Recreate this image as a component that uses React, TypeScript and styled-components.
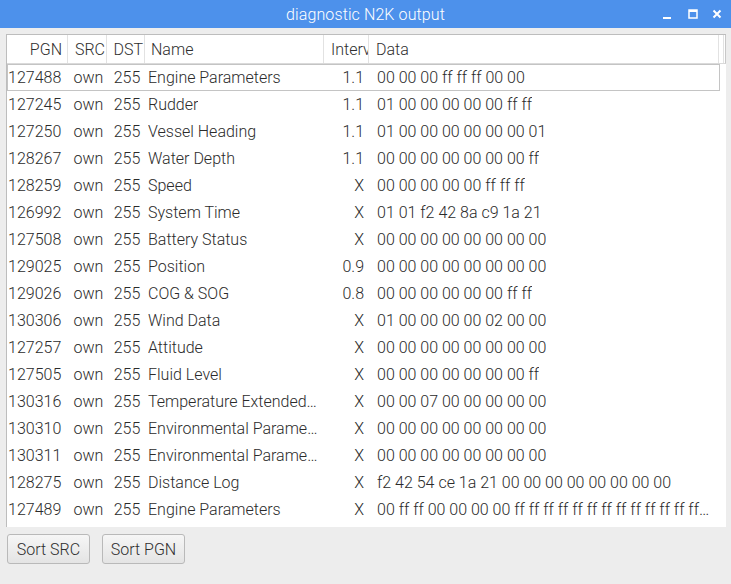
import React from 'react';
import styled, { createGlobalStyle } from 'styled-components';

const GlobalStyle = createGlobalStyle`
  html, body {
    margin: 0;
    padding: 0;
    background: #ededed;
  }
  body {
    font-family: Roboto, "Liberation Sans", sans-serif;
    color: #333333;
  }
`;

type Msg = {
  pgn: string;
  name: string;
  interval: string;
  data: string;
};

const messages: Msg[] = [
  { pgn: '127488', name: 'Engine Parameters', interval: '1.1', data: '00 00 00 ff ff ff 00 00' },
  { pgn: '127245', name: 'Rudder', interval: '1.1', data: '01 00 00 00 00 00 ff ff' },
  { pgn: '127250', name: 'Vessel Heading', interval: '1.1', data: '01 00 00 00 00 00 00 01' },
  { pgn: '128267', name: 'Water Depth', interval: '1.1', data: '00 00 00 00 00 00 00 ff' },
  { pgn: '128259', name: 'Speed', interval: 'X', data: '00 00 00 00 00 ff ff ff' },
  { pgn: '126992', name: 'System Time', interval: 'X', data: '01 01 f2 42 8a c9 1a 21' },
  { pgn: '127508', name: 'Battery Status', interval: 'X', data: '00 00 00 00 00 00 00 00' },
  { pgn: '129025', name: 'Position', interval: '0.9', data: '00 00 00 00 00 00 00 00' },
  { pgn: '129026', name: 'COG & SOG', interval: '0.8', data: '00 00 00 00 00 00 ff ff' },
  { pgn: '130306', name: 'Wind Data', interval: 'X', data: '01 00 00 00 00 02 00 00' },
  { pgn: '127257', name: 'Attitude', interval: 'X', data: '00 00 00 00 00 00 00 00' },
  { pgn: '127505', name: 'Fluid Level', interval: 'X', data: '00 00 00 00 00 00 00 ff' },
  { pgn: '130316', name: 'Temperature Extended Range', interval: 'X', data: '00 00 07 00 00 00 00 00' },
  { pgn: '130310', name: 'Environmental Parameters', interval: 'X', data: '00 00 00 00 00 00 00 00' },
  { pgn: '130311', name: 'Environmental Parameters', interval: 'X', data: '00 00 00 00 00 00 00 00' },
  { pgn: '128275', name: 'Distance Log', interval: 'X', data: 'f2 42 54 ce 1a 21 00 00 00 00 00 00 00 00' },
  {
    pgn: '127489',
    name: 'Engine Parameters',
    interval: 'X',
    data: '00 ff ff 00 00 00 00 ff ff ff ff ff ff ff ff ff ff ff ff ff ff ff ff ff ff',
  },
];

const COLS = '61px 39px 38px 179px 45px 350px';

const Window = styled.div`
  width: 731px;
  height: 584px;
  display: flex;
  flex-direction: column;
  background: #ededed;
  overflow: hidden;
`;

const TitleBar = styled.div`
  height: 28px;
  flex: none;
  background: #4d91eb;
  position: relative;
  display: flex;
  align-items: center;
  justify-content: center;
`;

const Title = styled.div`
  color: #ffffff;
  font-size: 16px;
  font-weight: 300;
  letter-spacing: 0.1px;
`;

const Controls = styled.div`
  position: absolute;
  right: 6px;
  top: 0;
  height: 28px;
  display: flex;
  align-items: center;
  gap: 8px;
`;

const Body = styled.div`
  flex: 1;
  display: flex;
  flex-direction: column;
  padding: 6px 5px 0 6px;
`;

const Panel = styled.div`
  height: 492px;
  background: #ffffff;
  border-top: 1px solid #bdbdbd;
  border-left: 1px solid #bdbdbd;
  display: flex;
  flex-direction: column;
`;

const HeaderRow = styled.div`
  display: grid;
  grid-template-columns: ${COLS} 5px;
  height: 28px;
  border-bottom: 1px solid #dadada;
  border-right: 1px solid #c8c8c8;
`;

const HeaderCell = styled.div<{ $align?: string; $pad?: string }>`
  display: flex;
  align-items: center;
  justify-content: ${(p) => p.$align || 'flex-start'};
  padding: ${(p) => p.$pad || '0'};
  border-right: 1px solid #e2e2e2;
  font-size: 16px;
  font-weight: 300;
  color: #2e2e2e;
  white-space: nowrap;
  overflow: hidden;
`;

const Row = styled.div<{ $focus?: boolean }>`
  display: grid;
  grid-template-columns: ${COLS};
  height: 27px;
  box-sizing: border-box;
  border: 1px solid ${(p) => (p.$focus ? '#c4c4c4' : 'transparent')};
  margin-right: 6px;
`;

const Cell = styled.div<{ $align?: string; $pad?: string }>`
  display: flex;
  align-items: center;
  justify-content: ${(p) => p.$align || 'flex-start'};
  padding: ${(p) => p.$pad || '0'};
  font-size: 16px;
  font-weight: 300;
  color: #2b2b2b;
  white-space: nowrap;
  overflow: hidden;
  min-width: 0;
`;

const Clip = styled.span`
  display: block;
  overflow: hidden;
  text-overflow: ellipsis;
  white-space: nowrap;
  min-width: 0;
`;

const ButtonBar = styled.div`
  display: flex;
  gap: 12px;
  padding: 7px 0 0 1px;
`;

const Button = styled.button`
  width: 83px;
  height: 30px;
  box-sizing: border-box;
  border: 1px solid #b9b9b9;
  border-radius: 3px;
  background: linear-gradient(#f6f6f6, #e4e4e4);
  font-family: Roboto, "Liberation Sans", sans-serif;
  font-size: 16px;
  font-weight: 300;
  color: #2e2e2e;
  padding: 0;
`;

function WinIcons() {
  return (
    <Controls>
      <svg width="16" height="16" viewBox="0 0 16 16">
        <rect x="2" y="11" width="8" height="2" fill="#fff" />
      </svg>
      <svg width="16" height="16" viewBox="0 0 16 16">
        <rect x="4" y="4" width="8" height="8" fill="none" stroke="#fff" strokeWidth="1.5" />
        <rect x="4" y="4" width="8" height="2" fill="#fff" />
      </svg>
      <svg width="16" height="16" viewBox="0 0 16 16">
        <path d="M4.5 4.5 L11.5 11.5 M11.5 4.5 L4.5 11.5" stroke="#fff" strokeWidth="2" />
      </svg>
    </Controls>
  );
}

export default function App() {
  return (
    <Window>
      <GlobalStyle />
      <TitleBar>
        <Title>diagnostic N2K output</Title>
        <WinIcons />
      </TitleBar>
      <Body>
        <Panel>
          <HeaderRow>
            <HeaderCell $align="flex-end" $pad="0 5px 0 0">PGN</HeaderCell>
            <HeaderCell $align="flex-end" $pad="0 1px 0 0">SRC</HeaderCell>
            <HeaderCell $align="flex-end" $pad="0 1px 0 0">DST</HeaderCell>
            <HeaderCell $pad="0 0 0 6px">Name</HeaderCell>
            <HeaderCell $pad="0 0 0 7px">Interval</HeaderCell>
            <HeaderCell $pad="0 0 0 7px">Data</HeaderCell>
            <HeaderCell />
          </HeaderRow>
          {messages.map((m, i) => (
            <Row key={m.pgn + i} $focus={i === 0}>
              <Cell>{m.pgn}</Cell>
              <Cell $align="center">own</Cell>
              <Cell $align="center">255</Cell>
              <Cell $pad="0 6px 0 2px">
                <Clip>{m.name}</Clip>
              </Cell>
              <Cell $align="flex-end" $pad="0 6px 0 0">{m.interval}</Cell>
              <Cell $pad="0 10px 0 7px">
                <Clip>{m.data}</Clip>
              </Cell>
            </Row>
          ))}
        </Panel>
        <ButtonBar>
          <Button>Sort SRC</Button>
          <Button>Sort PGN</Button>
        </ButtonBar>
      </Body>
    </Window>
  );
}
